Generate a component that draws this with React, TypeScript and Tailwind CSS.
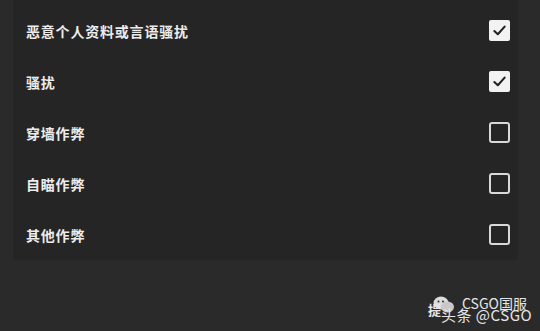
import { useState } from "react";

const ITEMS = [
  { label: "恶意个人资料或言语骚扰", checked: true },
  { label: "骚扰", checked: true },
  { label: "穿墙作弊", checked: false },
  { label: "自瞄作弊", checked: false },
  { label: "其他作弊", checked: false },
];

function Box({ checked, onClick }: { checked: boolean; onClick: () => void }) {
  if (checked) {
    return (
      <button onClick={onClick} className="w-[21px] h-[21px] rounded-[2px] bg-[#f2f2f2] flex items-center justify-center">
        <svg width="15" height="15" viewBox="0 0 16 16" fill="none">
          <path d="M2.5 8.5 L6.2 12 L13.5 3.8" stroke="#222" strokeWidth="2.2" strokeLinecap="round" strokeLinejoin="round" />
        </svg>
      </button>
    );
  }
  return (
    <button onClick={onClick} className="w-[21px] h-[21px] rounded-[3px] border-2 border-[#d8d8d8]" />
  );
}

export default function App() {
  const [items, setItems] = useState(ITEMS);

  return (
    <div className="relative w-[540px] h-[331px] bg-[#2a2a2a] overflow-hidden font-['Noto_Sans_CJK_SC',sans-serif]">
      <div className="ml-[13px] w-[505px] h-[260px] bg-[#252525] pt-[20px] pl-[13px] pr-[8px] flex flex-col gap-[30px]">
        {items.map((item, i) => (
          <div key={item.label} className="flex items-center justify-between h-[21px]">
            <span className="text-[14px] tracking-[0.8px] font-bold text-[#ececec] leading-none">{item.label}</span>
            <Box
              checked={item.checked}
              onClick={() =>
                setItems(items.map((it, j) => (j === i ? { ...it, checked: !it.checked } : it)))
              }
            />
          </div>
        ))}
      </div>

      {/* watermark */}
      <div className="absolute left-[428px] top-[292px] w-[112px] h-[32px] text-[#e6e6e6]">
        <svg className="absolute left-[5px] top-[3px]" width="22" height="20" viewBox="0 0 22 20">
          <ellipse cx="8" cy="8" rx="7.5" ry="6.5" fill="#dcdcdc" />
          <ellipse cx="14.5" cy="12" rx="6.5" ry="5.5" fill="#c8c8c8" />
          <circle cx="5.5" cy="6.5" r="1" fill="#2a2a2a" />
          <circle cx="10" cy="6.5" r="1" fill="#2a2a2a" />
        </svg>
        <span className="absolute left-0 top-[11px] text-[13px] font-bold leading-none">提</span>
        <span className="absolute left-[34px] top-[4px] text-[14px] leading-none">CSGO国服</span>
        <span className="absolute left-[13px] top-[15px] text-[15px] leading-none tracking-[0.5px]">头条 @CSGO</span>
      </div>
    </div>
  );
}
